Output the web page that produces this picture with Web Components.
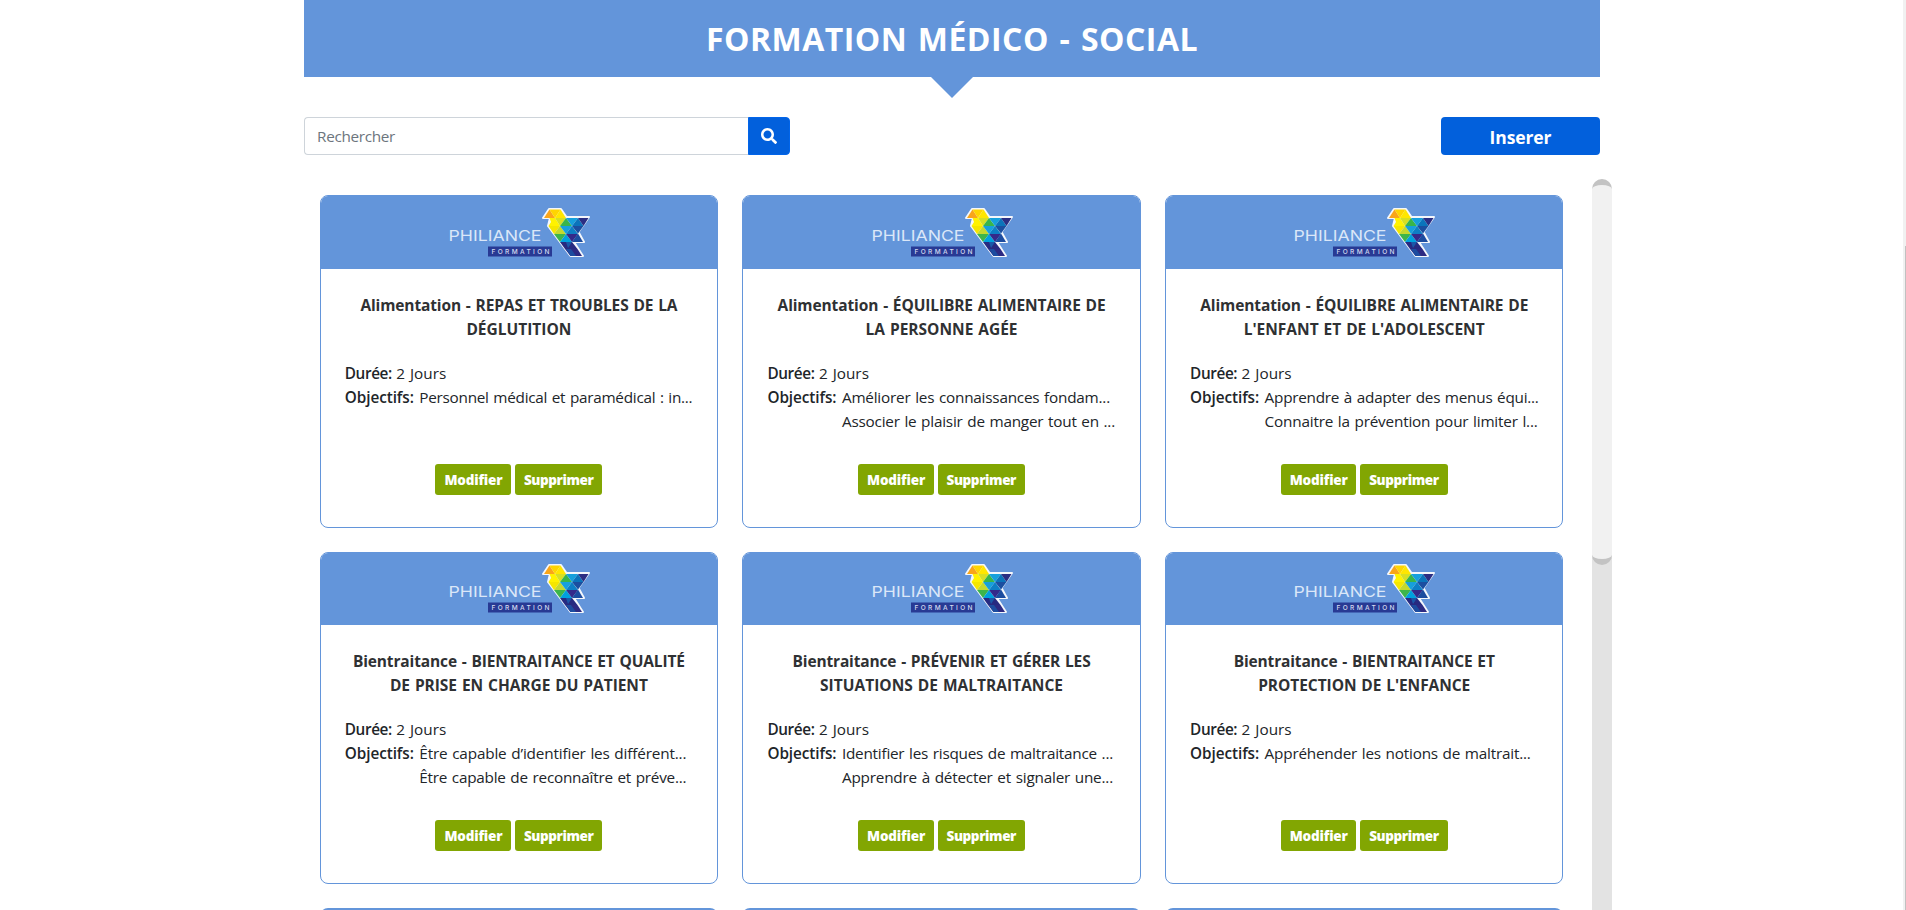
<!DOCTYPE html>
<html lang="fr"><head><meta charset="utf-8"><title>Formation médico-social</title>
<style>
html,body{margin:0;height:100%;overflow:hidden;background:#fff}
body{font-family:"Open Sans","Noto Sans",sans-serif;font-size:15.300px;line-height:24px;color:#212529}
</style></head><body>
<formation-page></formation-page>
<script>
const define=(name,html,ready)=>{
  const t=document.createElement('template');t.innerHTML=html;
  customElements.define(name,class extends HTMLElement{
    connectedCallback(){
      if(this.shadowRoot)return;
      this.attachShadow({mode:'open'}).append(t.content.cloneNode(true));
      if(ready)ready.call(this,this.shadowRoot);
    }
  });
};

/* One line of text whose tracking is set so that it fills the width w. */
define('fit-text',`<style>:host{display:inline-block;white-space:pre}span{display:inline-block;word-spacing:.06em}</style><span><slot></slot></span>`,function(r){
  const s=r.querySelector('span'),w=+this.getAttribute('w'),n=[...this.textContent].length;
  this.style.width=w+'px';
  s.style.letterSpacing=((w-s.getBoundingClientRect().width)/n).toFixed(3)+'px';
});

define('page-banner',`<style>
:host{display:block;position:relative;height:77px;background:#6395da;color:#fff;text-align:center}
h1{margin:0;padding-top:20px;font-size:32px;line-height:38px;font-weight:700}
i{position:absolute;left:50%;top:100%;margin-left:-21px;border:21px solid transparent;border-top-color:#6395da;border-bottom:0}
</style><h1><slot></slot></h1><i></i>`);

define('search-box',`<style>
:host{display:flex;width:486px;height:38px}
.f{flex:1;box-sizing:border-box;border:1px solid #ced4da;border-radius:4px 0 0 4px;border-right:0;padding:6px 12px;color:#6c757d}
.b{width:42px;background:#0260dc;border:1px solid #0265ea;box-sizing:border-box;border-radius:0 4px 4px 0;display:flex;align-items:center;justify-content:center}
svg{width:16px;height:16px}
</style><div class="f"><fit-text w="78">Rechercher</fit-text></div><div class="b"><svg viewBox="0 0 512 512" fill="#fff"><path d="M505 442.700L405.300 343c-4.500-4.500-10.600-7-17-7H372c27.600-35.300 44-79.700 44-128C416 93.100 322.900 0 208 0S0 93.100 0 208s93.100 208 208 208c48.300 0 92.700-16.400 128-44v16.300c0 6.400 2.500 12.500 7 17l99.700 99.700c9.400 9.400 24.600 9.400 33.900 0l28.300-28.300c9.400-9.400 9.400-24.600.1-34zM208 336c-70.700 0-128-57.200-128-128 0-70.700 57.200-128 128-128 70.700 0 128 57.200 128 128 0 70.700-57.200 128-128 128z"/></svg></div>`);

define('insert-button',`<style>
:host{display:flex;width:159px;height:38px;background:#0260dc;border-radius:4px;color:#fff;font-weight:700;font-size:17.500px;align-items:center;justify-content:center}
fit-text{margin-top:1px}
</style><fit-text w="62">Inserer</fit-text>`);

define('brand-logo',`<style>:host{display:block;width:144px;height:52px}svg{display:block}</style>
<svg width="144" height="52" viewBox="0 0 144 52">
<path d="M95 13L101 4H113L118.500 12H141L130.500 27L136 37H126L135 51H122.500L100 21L102 13Z" fill="#f4f7fb" stroke="#f4f7fb" stroke-width="2" stroke-linejoin="round"/>
<path d="M96 13L101.500 4.500L107 13Z" fill="#f9a51a"/><path d="M101.500 4.500H112.500L107 13Z" fill="#ffd500"/><path d="M112.500 4.500L118 13H107Z" fill="#ffe600"/>
<path d="M101.500 13H107L112 21H100.500L103 17Z" fill="#fff200"/><path d="M107 13H118L112 21Z" fill="#d7df23"/>
<path d="M100.500 21H112L106 29Z" fill="#f5e600"/><path d="M112 21L118 29H106Z" fill="#c4d92e"/><path d="M106 29H118L112 37Z" fill="#3db54a"/>
<path d="M118 13L124 21H112Z" fill="#39b54a"/><path d="M118 13H130L124 21Z" fill="#16a0dc"/><path d="M130 13L135.500 21H124Z" fill="#0b74bb"/><path d="M130 13H140.500L135.500 21Z" fill="#2b2e83"/>
<path d="M112 21H124L118 29Z" fill="#16a0dc"/><path d="M124 21L130 29H118Z" fill="#0e7fc5"/><path d="M124 21H135.500L130 28.500Z" fill="#1b4fa0"/>
<path d="M118 29L124 37H112Z" fill="#00a0dd"/><path d="M118 29H130L124 37Z" fill="#342a8a"/><path d="M130 28.500L135 37H124Z" fill="#1c4c9f"/>
<path d="M112 37H124L129.500 44H117Z" fill="#272a80"/><path d="M118 37H124L120 43Z" fill="#1b58a8"/><path d="M117 44H129.500L134 51H122.500Z" fill="#2d2a82"/><path d="M123 44L128 51H122.500L118 44Z" fill="#1c4c9f"/>
<text x="0.500" y="35.500" font-family="Inter,sans-serif" font-size="15" font-weight="400" fill="#dbe7f8" textLength="93" lengthAdjust="spacingAndGlyphs">PHILIANCE</text>
<rect x="40" y="41.500" width="64" height="10" fill="#283a94"/>
<text x="43.500" y="49" font-family="Inter,sans-serif" font-size="6.500" font-weight="500" fill="#d5dbf0" textLength="58">FORMATION</text>
</svg>`);

define('action-button',`<style>
:host{display:block;box-sizing:border-box;height:31px;background:#82a602;border-radius:3px;color:#fff;font-weight:800;font-size:13.500px;line-height:32px;padding:0 9px}
:host(:first-child){padding-right:8.500px}
</style><slot></slot>`);

define('formation-card',`<style>
:host{display:flex;flex-direction:column;box-sizing:border-box;height:332.500px;border:1px solid #6395da;border-radius:8px;overflow:hidden}
header{height:72.500px;background:#6395da;display:flex;justify-content:center;flex:none}
brand-logo{margin:8.500px 0 0 2px}
h2{margin:24px 0 0;height:48px;font-size:15.500px;font-weight:700;text-align:center;color:#2f3133}
h2 fit-text{display:block;margin:0 auto}
dl{margin:20px 0 0 24px;height:72px;display:grid;grid-template-columns:auto 1fr;align-content:start}
b{font-weight:600}
.d{display:flex;grid-column:1/3}
.l{display:grid;margin-left:5.500px}
footer{margin-top:31px;display:flex;gap:4px;justify-content:center}
</style><header><brand-logo></brand-logo></header><h2></h2>
<dl><div class="d"><b><fit-text w="51.500">Durée: </fit-text></b><fit-text w="50">2 Jours</fit-text></div>
<b><fit-text w="69">Objectifs:</fit-text></b><div class="l"></div></dl>
<footer><action-button><fit-text w="58">Modifier</fit-text></action-button><action-button><fit-text w="69.500">Supprimer</fit-text></action-button></footer>`,function(r){
  const d=JSON.parse(this.getAttribute('data'));
  const fill=(el,rows)=>rows.forEach(([t,w])=>{const f=document.createElement('fit-text');f.setAttribute('w',w);f.textContent=t;el.append(f)});
  fill(r.querySelector('h2'),d.title);fill(r.querySelector('.l'),d.goals);
});

/* The top edge of a card whose content is still below the fold. */
define('card-edge',`<style>:host{display:block;height:40px;background:#6395da;border-radius:8px 8px 0 0}</style>`);

define('scroll-rail',`<style>
:host{display:block;width:20px;background:linear-gradient(#fff 0 20px,#e3e3e3 20px)}
div{box-sizing:border-box;height:386px;background:#f1f1f1;border:solid #c3c3c3;border-width:6px 0;border-radius:10px}
</style><div></div>`);

define('window-rail',`<style>
:host{display:block;position:absolute;right:0;top:0;width:3px;height:910px;background:#f1f1f1;overflow:hidden}
div{margin:246px 0 0 2px;height:664px;background:#c1c1c1}
</style><div></div>`);

define('formation-page',`<style>
:host{display:block;height:910px;overflow:hidden;position:relative}
main{width:1296px;margin-left:304px}
.bar{display:flex;justify-content:space-between;margin-top:40px}
.area{display:flex;justify-content:space-between;width:1308px;height:731px;margin-top:24px;overflow:hidden}
.grid{display:grid;grid-template-columns:repeat(3,398.200px);gap:24px 24.470px;padding:16px 0 0 15.800px;align-content:start}
</style><main><page-banner><fit-text w="492">FORMATION MÉDICO - SOCIAL</fit-text></page-banner>
<div class="bar"><search-box></search-box><insert-button></insert-button></div>
<div class="area"><div class="grid"></div><scroll-rail></scroll-rail></div></main><window-rail></window-rail>`,function(r){
  const g=r.querySelector('.grid');
  [
   [[['Alimentation - REPAS ET TROUBLES DE LA',317],['DÉGLUTITION',105]],[['Personnel médical et paramédical : in...',273]]],
   [[['Alimentation - ÉQUILIBRE ALIMENTAIRE DE',328],['LA PERSONNE AGÉE',152]],[['Améliorer les connaissances fondam...',268],['Associer le plaisir de manger tout en ...',273]]],
   [[['Alimentation - ÉQUILIBRE ALIMENTAIRE DE',328],["L'ENFANT ET DE L'ADOLESCENT",241]],[['Apprendre à adapter des menus équi...',274],['Connaitre la prévention pour limiter l...',273]]],
   [[['Bientraitance - BIENTRAITANCE ET QUALITÉ',332],['DE PRISE EN CHARGE DU PATIENT',258]],[['Être capable d’identifier les différent...',267],['Être capable de reconnaître et préve...',267]]],
   [[['Bientraitance - PRÉVENIR ET GÉRER LES',298],['SITUATIONS DE MALTRAITANCE',243]],[['Identifier les risques de maltraitance ...',271],['Apprendre à détecter et signaler une...',271]]],
   [[['Bientraitance - BIENTRAITANCE ET',261],["PROTECTION DE L'ENFANCE",212]],[['Appréhender les notions de maltrait...',266]]]
  ].forEach(([title,goals])=>{const c=document.createElement('formation-card');c.setAttribute('data',JSON.stringify({title,goals}));g.append(c)});
  for(let i=0;i<3;i++)g.append(document.createElement('card-edge'));
});
</script></body></html>
